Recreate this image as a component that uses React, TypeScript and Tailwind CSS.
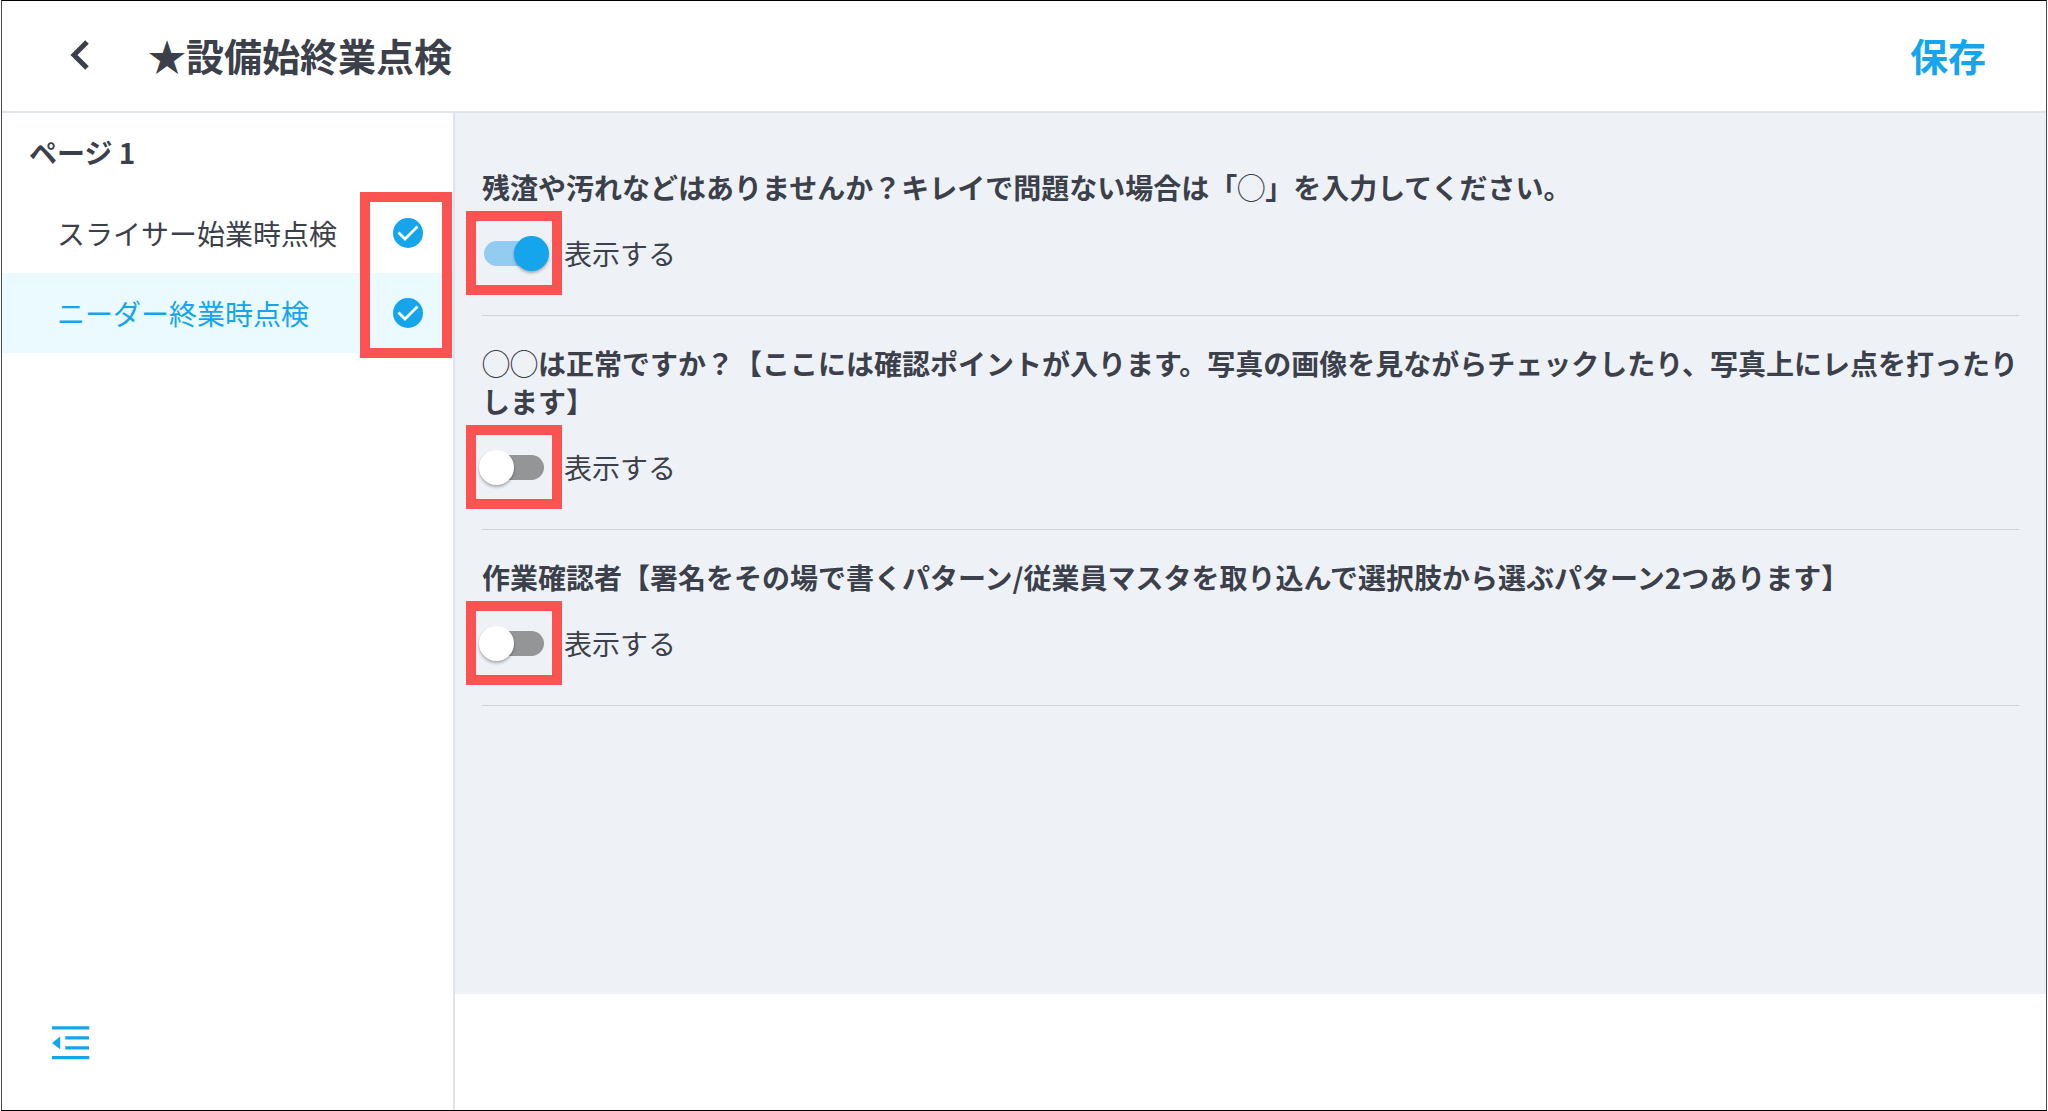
import { useState } from 'react'
import clsx from 'clsx'

interface CheckPage {
  id: string
  name: string
  done: boolean
}

interface Question {
  id: string
  title: string
  visible: boolean
}

const pages: CheckPage[] = [
  { id: 'slicer', name: 'スライサー始業時点検', done: true },
  { id: 'kneader', name: 'ニーダー終業時点検', done: true },
]

const initialQuestions: Question[] = [
  {
    id: 'residue',
    title:
      '残渣や汚れなどはありませんか？キレイで問題ない場合は「◯」を入力してください。',
    visible: true,
  },
  {
    id: 'condition',
    title:
      '◯◯は正常ですか？【ここには確認ポイントが入ります。写真の画像を見ながらチェックしたり、写真上にレ点を打ったりします】',
    visible: false,
  },
  {
    id: 'confirmer',
    title:
      '作業確認者【署名をその場で書くパターン/従業員マスタを取り込んで選択肢から選ぶパターン2つあります】',
    visible: false,
  },
]

function BackIcon() {
  return (
    <svg width="20" height="30" viewBox="0 0 20 30" aria-hidden="true">
      <path
        d="M17 2 L4 15 L17 28"
        fill="none"
        stroke="currentColor"
        strokeWidth="5"
      />
    </svg>
  )
}

function DoneIcon() {
  return (
    <svg width="30" height="30" viewBox="0 0 30 30" aria-hidden="true">
      <circle cx="15" cy="15" r="15" fill="#14a5ed" />
      <path
        d="M5.5 14.5 L12 21 L24.5 8.5"
        fill="none"
        stroke="#fff"
        strokeWidth="2.8"
      />
    </svg>
  )
}

function CollapseIcon() {
  return (
    <svg
      width="38"
      height="34"
      viewBox="0 0 38 34"
      fill="currentColor"
      aria-hidden="true"
    >
      <path d="M0 .3h37.3v3.2H0zM13.3 10.2h23.7v3.2H13.3zM13.3 20.2h23.7v3.2H13.3zM0 30h37.3v3.2H0zM8.2 10.6v12.6L0 16.9z" />
    </svg>
  )
}

interface QuestionItemProps {
  question: Question
  onChange: (visible: boolean) => void
}

function QuestionItem({ question, onChange }: QuestionItemProps) {
  return (
    <li className="border-b border-[#cdd2d7] pt-7 pb-5">
      <h2 className="-mr-1 text-[28px] leading-[38px] font-bold">
        {question.title}
      </h2>
      <label className="mt-[5px] -ml-4 flex w-fit items-center gap-0.5 text-[28px] leading-[38px]">
        <span className="flex h-[84px] w-24 items-center justify-center border-10 border-[#fb5252]">
          <input
            type="checkbox"
            role="switch"
            checked={question.visible}
            onChange={(e) => onChange(e.target.checked)}
            className="relative h-[35px] w-[70px] shrink-0 cursor-pointer appearance-none before:absolute before:inset-[5px] before:rounded-full before:bg-[#949597] after:absolute after:top-0 after:left-0 after:size-[35px] after:rounded-full after:bg-white after:shadow-[0_2px_3px_rgba(0,0,0,0.3)] checked:before:bg-[#92cdf1] checked:after:left-[35px] checked:after:bg-[#14a5ed]"
          />
        </span>
        表示する
      </label>
    </li>
  )
}

export default function App() {
  const [current, setCurrent] = useState('kneader')
  const [questions, setQuestions] = useState(initialQuestions)

  const setVisible = (id: string, visible: boolean) =>
    setQuestions(questions.map((q) => (q.id === id ? { ...q, visible } : q)))

  return (
    <div className="bg-white px-px font-['Noto_Sans_CJK_JP',sans-serif] text-[#3b404a]">
      <div className="flex min-h-screen flex-col border border-x-[#4a4b4e] border-y-black">
        <header className="flex h-28 items-center border-b-2 border-[#dfe4ec] pr-[60px] pb-0.5 pl-[68px]">
          <button type="button" aria-label="戻る" className="w-[78px]">
            <BackIcon />
          </button>
          <h1 className="flex-1 text-[38px] leading-[56px] font-bold">
            ★設備始終業点検
          </h1>
          <button
            type="button"
            className="text-[38px] leading-[56px] font-bold text-[#14a5ed]"
          >
            保存
          </button>
        </header>
        <div className="flex flex-1">
          <nav className="flex w-[453px] shrink-0 flex-col border-r-2 border-[#dfe4ec]">
            <h2 className="flex h-20 items-center pb-0.5 pl-[27px] text-[28px] leading-[38px] font-bold">
              ページ 1
            </h2>
            <div className="relative">
              <ul>
                {pages.map((page) => (
                  <li key={page.id}>
                    <button
                      type="button"
                      onClick={() => setCurrent(page.id)}
                      className={clsx(
                        'flex h-20 w-full items-center justify-between pr-[30px] pl-[55px] text-[28px] leading-[38px]',
                        current === page.id && 'bg-[#eafaff] text-[#14a5ed]'
                      )}
                    >
                      {page.name}
                      {page.done && <DoneIcon />}
                    </button>
                  </li>
                ))}
              </ul>
              <div className="pointer-events-none absolute -top-px right-px h-[166px] w-[92px] border-10 border-[#fb5252]" />
            </div>
            <button
              type="button"
              aria-label="メニューを閉じる"
              className="mt-auto mb-[50px] ml-[50px] self-start text-[#14a5ed]"
            >
              <CollapseIcon />
            </button>
          </nav>
          <div className="flex min-w-0 flex-1 flex-col">
            <main className="flex-1 bg-[#eef2f7] p-[27px]">
              <ul>
                {questions.map((question) => (
                  <QuestionItem
                    key={question.id}
                    question={question}
                    onChange={(visible) => setVisible(question.id, visible)}
                  />
                ))}
              </ul>
            </main>
            <footer className="h-29" />
          </div>
        </div>
      </div>
    </div>
  )
}
